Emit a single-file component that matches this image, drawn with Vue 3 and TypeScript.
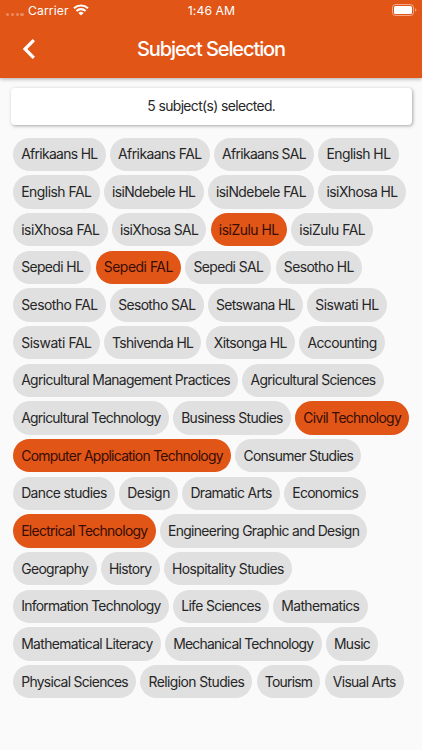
<script setup lang="ts">
import { computed, ref } from 'vue'

interface Subject {
  name: string
  width: number
  selected: boolean
}

const subject = (name: string, width: number, selected = false): Subject => ({ name, width, selected })

const subjects = ref<Subject[]>([
  subject('Afrikaans HL', 92.7),
  subject('Afrikaans FAL', 99.8),
  subject('Afrikaans SAL', 100.3),
  subject('English HL', 80.3),
  subject('English FAL', 86.6),
  subject('isiNdebele HL', 99.8),
  subject('isiNdebele FAL', 106.4),
  subject('isiXhosa HL', 87.5),
  subject('isiXhosa FAL', 94.7),
  subject('isiXhosa SAL', 94.5),
  subject('isiZulu HL', 76.4, true),
  subject('isiZulu FAL', 82.3),
  subject('Sepedi HL', 78.4),
  subject('Sepedi FAL', 85.5, true),
  subject('Sepedi SAL', 86.2),
  subject('Sesotho HL', 86.3),
  subject('Sesotho FAL', 92.8),
  subject('Sesotho SAL', 93.6),
  subject('Setswana HL', 95.2),
  subject('Siswati HL', 79.6),
  subject('Siswati FAL', 86.7),
  subject('Tshivenda HL', 97.6),
  subject('Xitsonga HL', 89.4),
  subject('Accounting', 85.6),
  subject('Agricultural Management Practices', 225.2),
  subject('Agricultural Sciences', 141.3),
  subject('Agricultural Technology', 155.8),
  subject('Business Studies', 118.0),
  subject('Civil Technology', 114.1, true),
  subject('Computer Application Technology', 218.1, true),
  subject('Consumer Studies', 126.1),
  subject('Dance studies', 101.9),
  subject('Design', 59.0),
  subject('Dramatic Arts', 97.6),
  subject('Economics', 82.3),
  subject('Electrical Technology', 142.7, true),
  subject('Engineering Graphic and Design', 207.5),
  subject('Geography', 83.5),
  subject('History', 58.9),
  subject('Hospitality Studies', 128.3),
  subject('Information Technology', 155.8),
  subject('Life Sciences', 95.8),
  subject('Mathematics', 94.6),
  subject('Mathematical Literacy', 147.8),
  subject('Mechanical Technology', 156.6),
  subject('Music', 52.6),
  subject('Physical Sciences', 123.2),
  subject('Religion Studies', 112.0),
  subject('Tourism', 63.9),
  subject('Visual Arts', 79.2),
])

const selectedCount = computed(() => subjects.value.filter((s) => s.selected).length)

// Tracks each label so that it fills its chip, less the side padding.
const CHIP_PADDING = 8.2
const ruler = document.createElement('canvas').getContext('2d')

function chipStyle(s: Subject) {
  let spacing = -0.6
  if (ruler) {
    ruler.font = '400 13.9px Inter, "Liberation Sans", sans-serif'
    const natural = ruler.measureText(s.name).width
    spacing = (s.width - 2 * CHIP_PADDING - natural) / s.name.length
  }
  return { width: `${s.width}px`, letterSpacing: `${spacing.toFixed(3)}px` }
}
</script>

<template>
  <div class="screen">
    <header class="header">
      <div class="status">
        <div class="carrier">
          <span class="dots"><i /><i /><i /><i /></span>
          <span class="carrier-name">Carrier</span>
          <svg class="wifi" viewBox="0 0 16 12" aria-hidden="true">
            <path d="M1 4.25A10.2 10.2 0 0 1 15 4.25" />
            <path d="M3.45 6.95A6.7 6.7 0 0 1 12.55 6.95" />
            <path class="wifi-dot" d="M8 11.6 5.4 9A3.7 3.7 0 0 1 10.6 9Z" />
          </svg>
        </div>
        <span class="time">1:46 AM</span>
        <svg class="battery" viewBox="0 0 25 12" aria-hidden="true">
          <rect class="battery-case" x=".5" y=".5" width="21" height="11" rx="3" />
          <rect x="2" y="2" width="18" height="8" rx="1.5" fill="#fff" />
          <path class="battery-tip" d="M23 4.2Q24.4 4.7 24.4 6T23 7.8Z" />
        </svg>
      </div>
      <div class="toolbar">
        <button class="back" type="button" aria-label="Back">
          <svg viewBox="0 0 12 20" aria-hidden="true"><path d="M10.8 1.2 2 10l8.8 8.8" /></svg>
        </button>
        <h1 class="title">Subject Selection</h1>
        <span />
      </div>
    </header>
    <main class="content">
      <div class="summary">{{ selectedCount }} subject(s) selected.</div>
      <div class="chips">
        <button
          v-for="s in subjects"
          :key="s.name"
          type="button"
          class="chip"
          :class="{ selected: s.selected }"
          :style="chipStyle(s)"
          @click="s.selected = !s.selected"
        >
          {{ s.name }}
        </button>
      </div>
    </main>
  </div>
</template>

<style>
body {
  margin: 0;
  background: #fafafa;
}
</style>

<style scoped>
.screen {
  height: 750px;
  overflow: hidden;
  background: #fafafa;
  color: #262626;
  font-family: Inter, "Liberation Sans", sans-serif;
}
.header {
  height: 77.5px;
  background: #e15517;
  color: #fff;
  box-shadow: 0 1px 4px rgba(0, 0, 0, 0.32);
}
.status {
  display: grid;
  grid-template-columns: 1fr auto 1fr;
  align-items: center;
  height: 20.5px;
  padding: 0 5px 0 6px;
  font-size: 12.2px;
}
.carrier {
  display: flex;
  align-items: center;
}
.dots {
  display: flex;
  gap: 1.4px;
  width: 22px;
  padding-top: 8px;
}
.dots i {
  width: 3.4px;
  height: 3.4px;
  border-radius: 50%;
  background: rgba(255, 255, 255, 0.32);
}
.carrier-name {
  width: 40px;
  letter-spacing: 0.1px;
}
.wifi {
  width: 16px;
  height: 12px;
  margin-left: 5px;
  fill: none;
  stroke: #fff;
  stroke-width: 2.1;
}
.wifi .wifi-dot {
  fill: #fff;
  stroke: none;
}
.time {
  letter-spacing: 0.1px;
}
.battery {
  justify-self: end;
  width: 25px;
  height: 12px;
}
.battery-case {
  fill: none;
  stroke: rgba(255, 255, 255, 0.5);
}
.battery-tip {
  fill: rgba(255, 255, 255, 0.5);
}
.toolbar {
  display: grid;
  grid-template-columns: 60px 1fr 60px;
  align-items: center;
  height: 57px;
}
.back {
  display: flex;
  padding: 0 0 0 23px;
  border: 0;
  background: none;
}
.back svg {
  width: 12px;
  height: 20px;
  fill: none;
  stroke: #fff;
  stroke-width: 3.3;
}
.title {
  margin: 0;
  font-size: 20px;
  font-weight: 500;
  letter-spacing: -1.1px;
  text-align: center;
}
.content {
  padding: 10.3px 10px 0;
}
.summary {
  display: flex;
  align-items: center;
  justify-content: center;
  height: 37.2px;
  margin-left: 0.6px;
  border-radius: 4px;
  background: #fff;
  box-shadow: 1px 1px 3.5px rgba(0, 0, 0, 0.34);
  font-size: 13.9px;
  letter-spacing: -0.62px;
}
.chips {
  display: flex;
  flex-wrap: wrap;
  gap: 4.28px 4.2px;
  padding: 12.8px 0 0 3px;
}
.chip {
  box-sizing: border-box;
  height: 33.4px;
  padding: 0 0 0 8.2px;
  border: 0;
  border-radius: 17px;
  background: #e0e0e0;
  color: #262626;
  font: 400 13.9px Inter, "Liberation Sans", sans-serif;
  text-align: left;
  white-space: nowrap;
}
.chip.selected {
  background: #e15517;
  color: #360d03;
}
</style>
